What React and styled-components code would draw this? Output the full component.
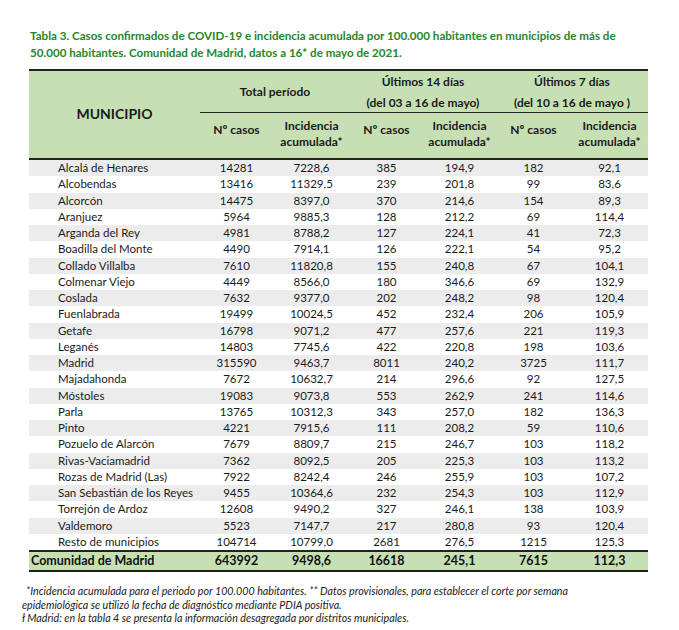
import React from 'react';
import styled, { createGlobalStyle } from 'styled-components';

const GlobalStyle = createGlobalStyle`
	html, body {
		margin: 0;
		padding: 0;
		background: #ffffff;
	}
	body {
		font-family: Lato, 'Open Sans', 'Liberation Sans', sans-serif;
		color: #1a1a1a;
	}
`;

const COLS = '171px 73px 77px 73px 73px 75px 77px';

const Page = styled.div`
	width: 679px;
	height: 630px;
	box-sizing: border-box;
	padding: 27px 0 0 0;
	overflow: hidden;
`;

const Title = styled.div`
	margin: 0 0 0 30px;
	width: 640px;
	color: #26862a;
	font-size: 11.6px;
	font-weight: 700;
	line-height: 17px;
	white-space: nowrap;
`;

const Table = styled.div`
	margin: 8px 0 0 29px;
	width: 619px;
`;

const Head = styled.div`
	display: grid;
	grid-template-columns: ${COLS};
	grid-template-rows: 42px 45px;
	background: #c6e0b4;
	border-top: 2px solid #222;
	border-bottom: 2px solid #222;
	font-weight: 700;
	font-size: 12px;
	color: #1a1a1a;
`;

const MunicipioHead = styled.div`
	grid-column: 1;
	grid-row: 1 / 3;
	display: flex;
	align-items: center;
	justify-content: center;
	font-size: 14px;
	padding-bottom: 2px;
`;

const GroupHead = styled.div`
	grid-row: 1;
	grid-column: ${p => p.span};
	display: flex;
	flex-direction: column;
	align-items: center;
	justify-content: center;
	gap: 6px;
	border-bottom: 1px solid #222;
	line-height: 15px;
	white-space: nowrap;
`;

const SubHead = styled.div`
	grid-row: 2;
	display: flex;
	flex-direction: column;
	align-items: center;
	justify-content: center;
	text-align: center;
	line-height: 16px;
	white-space: nowrap;
	padding-bottom: ${p => (p.single ? '12px' : '3px')};
`;

const Row = styled.div`
	display: grid;
	grid-template-columns: ${COLS};
	height: 16.25px;
	align-items: center;
	background: ${p => (p.striped ? '#ececec' : '#ffffff')};
	font-size: 11.5px;
	line-height: 16px;
`;

const NameCell = styled.div`
	padding-left: 29px;
	white-space: nowrap;
`;

const NumCell = styled.div`
	display: flex;
	justify-content: center;
	white-space: nowrap;
`;

const TotalRow = styled(Row)`
	height: 18px;
	background: #c6e0b4;
	border-top: 2px solid #222;
	border-bottom: 2px solid #222;
	font-weight: 700;
	font-size: 12.5px;
	color: #111;
`;

const TotalName = styled.div`
	padding-left: 2px;
	font-size: 12.5px;
	white-space: nowrap;
`;

const Notes = styled.div`
	margin: 12px 0 0 22px;
	font-size: 10.7px;
	font-style: italic;
	line-height: 13.5px;
	color: #1a1a1a;
`;

const NoteLine = styled.div`
	padding-left: ${p => (p.indent ? '4px' : '0')};
	white-space: nowrap;
`;

const rows = [
	['Alcalá de Henares', '14281', '7228,6', '385', '194,9', '182', '92,1'],
	['Alcobendas', '13416', '11329,5', '239', '201,8', '99', '83,6'],
	['Alcorcón', '14475', '8397,0', '370', '214,6', '154', '89,3'],
	['Aranjuez', '5964', '9885,3', '128', '212,2', '69', '114,4'],
	['Arganda del Rey', '4981', '8788,2', '127', '224,1', '41', '72,3'],
	['Boadilla del Monte', '4490', '7914,1', '126', '222,1', '54', '95,2'],
	['Collado Villalba', '7610', '11820,8', '155', '240,8', '67', '104,1'],
	['Colmenar Viejo', '4449', '8566,0', '180', '346,6', '69', '132,9'],
	['Coslada', '7632', '9377,0', '202', '248,2', '98', '120,4'],
	['Fuenlabrada', '19499', '10024,5', '452', '232,4', '206', '105,9'],
	['Getafe', '16798', '9071,2', '477', '257,6', '221', '119,3'],
	['Leganés', '14803', '7745,6', '422', '220,8', '198', '103,6'],
	['Madrid', '315590', '9463,7', '8011', '240,2', '3725', '111,7'],
	['Majadahonda', '7672', '10632,7', '214', '296,6', '92', '127,5'],
	['Móstoles', '19083', '9073,8', '553', '262,9', '241', '114,6'],
	['Parla', '13765', '10312,3', '343', '257,0', '182', '136,3'],
	['Pinto', '4221', '7915,6', '111', '208,2', '59', '110,6'],
	['Pozuelo de Alarcón', '7679', '8809,7', '215', '246,7', '103', '118,2'],
	['Rivas-Vaciamadrid', '7362', '8092,5', '205', '225,3', '103', '113,2'],
	['Rozas de Madrid (Las)', '7922', '8242,4', '246', '255,9', '103', '107,2'],
	['San Sebastián de los Reyes', '9455', '10364,6', '232', '254,3', '103', '112,9'],
	['Torrejón de Ardoz', '12608', '9490,2', '327', '246,1', '138', '103,9'],
	['Valdemoro', '5523', '7147,7', '217', '280,8', '93', '120,4'],
	['Resto de municipios', '104714', '10799,0', '2681', '276,5', '1215', '125,3'],
];

const total = ['Comunidad de Madrid', '643992', '9498,6', '16618', '245,1', '7615', '112,3'];

const SubHeads = () =>
	[0, 1, 2].map(i => [
		<SubHead key={`n${i}`} single>
			Nº casos
		</SubHead>,
		<SubHead key={`i${i}`}>
			<span>Incidencia</span>
			<span>acumulada*</span>
		</SubHead>,
	]);

const App = () => (
	<Page>
		<GlobalStyle />
		<Title>
			Tabla 3. Casos confirmados de COVID-19 e incidencia acumulada por 100.000 habitantes en municipios de más de
			<br />
			50.000 habitantes. Comunidad de Madrid, datos a 16* de mayo de 2021.
		</Title>
		<Table>
			<Head>
				<MunicipioHead>MUNICIPIO</MunicipioHead>
				<GroupHead span='2 / 4'>
					<span>Total período</span>
				</GroupHead>
				<GroupHead span='4 / 6'>
					<span>Últimos 14 días</span>
					<span>(del 03 a 16 de mayo)</span>
				</GroupHead>
				<GroupHead span='6 / 8'>
					<span>Últimos 7 días</span>
					<span>(del 10 a 16 de mayo )</span>
				</GroupHead>
				<SubHeads />
			</Head>
			{rows.map(([name, ...values], index) => (
				<Row key={name} striped={index % 2 === 0}>
					<NameCell>{name}</NameCell>
					{values.map((v, i) => (
						<NumCell key={i}>{v}</NumCell>
					))}
				</Row>
			))}
			<TotalRow>
				<TotalName>{total[0]}</TotalName>
				{total.slice(1).map((v, i) => (
					<NumCell key={i}>{v}</NumCell>
				))}
			</TotalRow>
		</Table>
		<Notes>
			<NoteLine indent>
				*Incidencia acumulada para el periodo por 100.000 habitantes. ** Datos provisionales, para establecer el corte por semana
			</NoteLine>
			<NoteLine>epidemiológica se utilizó la fecha de diagnóstico mediante PDIA positiva.</NoteLine>
			<NoteLine>ł Madrid: en la tabla 4 se presenta la información desagregada por distritos municipales.</NoteLine>
		</Notes>
	</Page>
);

export default App;
